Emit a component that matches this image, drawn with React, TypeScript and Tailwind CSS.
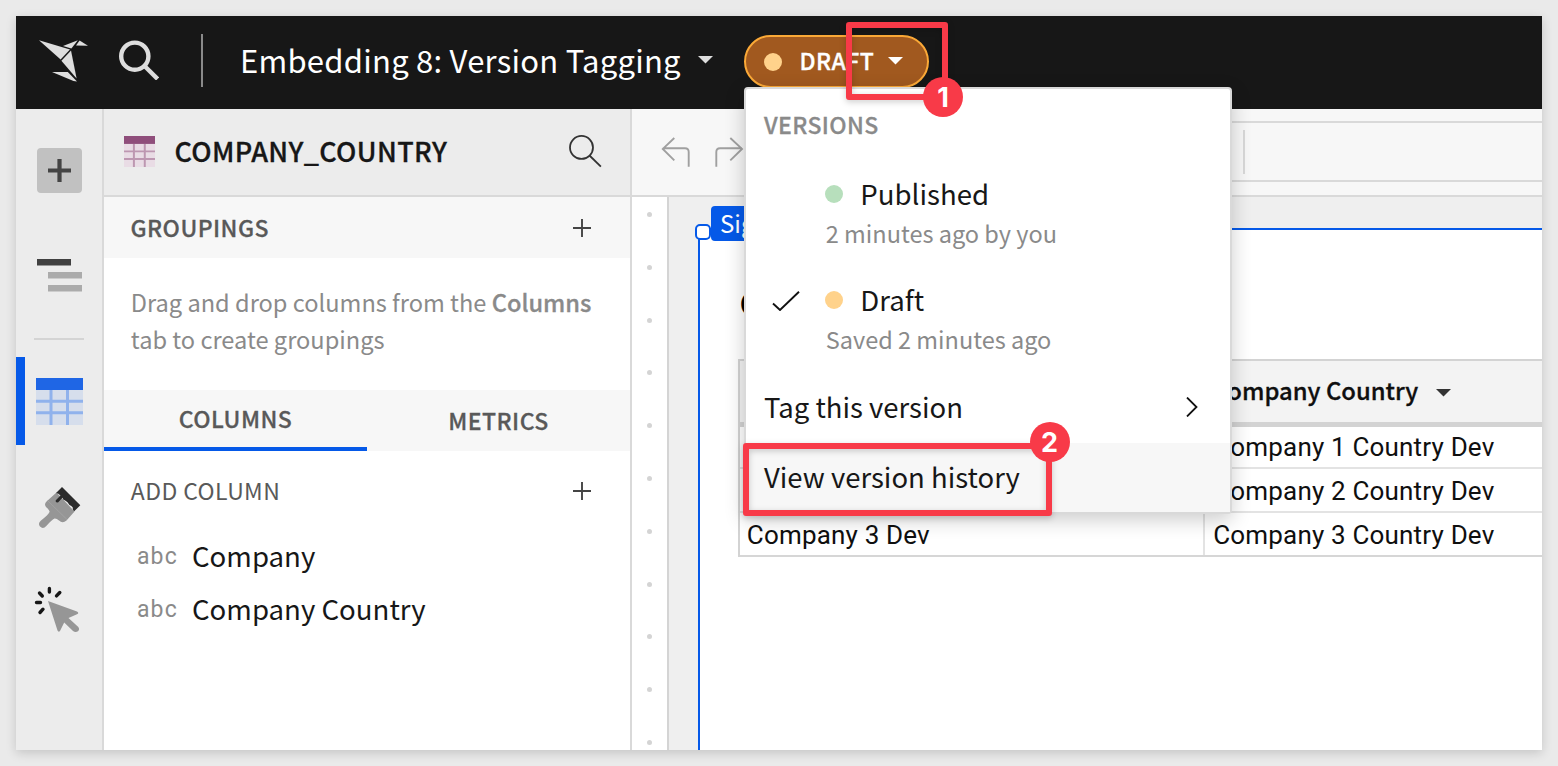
import type { ReactNode } from "react";

function HummingbirdLogo() {
  return (
    <svg className="h-12 w-[50px]" viewBox="0 0 50 48" fill="#dedede">
      <path d="M0 3.2 L31 12.6 L21.6 22.6 Z" />
      <path d="M24 8.9 L38.8 3.2 L32.4 11.4 Z" />
      <path d="M40.600 3.600 L49 8.800 L37 8.500 Z" />
      <path d="M22.4 23.8 L32 13.6 L37.6 41.6 Z" />
      <path d="M13 34.9 L28.8 34.9 L38 44.6 L34.5 44 Z" />
    </svg>
  );
}

function Caret({ className }: { className: string }) {
  return (
    <svg className={`h-[7.500px] w-[15px] shrink-0 ${className}`} viewBox="0 0 15 7.5" fill="currentColor">
      <path d="M0 0h15L7.5 7.500z" />
    </svg>
  );
}

function Plus() {
  return (
    <svg className="h-[18px] w-[18px]" viewBox="0 0 18 18" stroke="#444" strokeWidth="1.9">
      <path d="M9 0v18M0 9h18" />
    </svg>
  );
}

function TopBar() {
  return (
    <header className="flex h-[93px] shrink-0 items-start bg-[#171717]">
      <div className="ml-[23px] mt-[21px]">
        <HummingbirdLogo />
      </div>
      <svg className="ml-[30px] mt-6 h-10 w-10" viewBox="0 0 40 40" fill="none" stroke="#dedede" strokeWidth="4.4">
        <circle cx="15.8" cy="16.2" r="13.6" />
        <path d="M25.8 26.2 L38.6 39" />
      </svg>
      <div className="ml-[42px] mt-[18px] h-[53px] w-[2px] bg-[#8a8a8a]" />
      <h1 className="ml-[37px] mt-[22px] w-[443px] whitespace-nowrap text-[31px] leading-[44px] tracking-[0.25px] text-white">
        Embedding 8: Version Tagging
      </h1>
      <Caret className="ml-[14.500px] mt-[40px] text-[#dedede]" />
      <button className="ml-[31.500px] mt-[19px] flex h-[53px] w-[185px] items-center rounded-full border-2 border-[#fba937] bg-[#a1591f]">
        <span className="ml-[18px] h-[18px] w-[18px] rounded-full bg-[#ffd28b]" />
        <span className="ml-[17.500px] -mt-[3px] w-[74px] text-[23px] leading-[32px] font-medium tracking-[0.45px] text-white [-webkit-text-stroke:0.3px]">DRAFT</span>
        <Caret className="ml-[14.500px] -mt-px text-white" />
      </button>
    </header>
  );
}

function GridIcon({ className, head, body, line }: { className: string; head: string; body: string; line: string }) {
  return (
    <svg className={className} viewBox="0 0 47 47">
      <path fill={body} d="M0 0h47v47H0z" />
      <path stroke={line} strokeWidth="3" d="M15 12v35M31.5 12v35M0 23.3h47M0 34.7h47" />
      <path fill={head} d="M0 0h47v12H0z" />
    </svg>
  );
}

function Rail() {
  return (
    <nav className="relative flex w-[88px] shrink-0 flex-col border-r-2 border-[#d9d9d9] bg-[#ececec]">
      <div className="ml-[21px] mt-[39px] flex h-[45px] w-[45px] items-center justify-center rounded-[4px] bg-[#c1c1c1]">
        <svg className="h-[23px] w-[23px]" viewBox="0 0 23 23" stroke="#444" strokeWidth="4.2">
          <path d="M11.5 0v23M0 11.5h23" />
        </svg>
      </div>
      <svg className="ml-[21px] mt-[66px] h-[33px] w-[45px]" viewBox="0 0 45 33">
        <path fill="#404040" d="M0 0h34v6.5H0z" />
        <path fill="#ababab" d="M11 13h34v6.5H11zM11 26h34v6.5H11z" />
      </svg>
      <div className="ml-[18px] mt-[46px] h-[2px] w-[50px] bg-[#d4d4d4]" />
      <div className="mt-[17px] flex h-[88px] items-center border-l-[9px] border-[#0559e8] pl-[11px]">
        <GridIcon className="h-[47px] w-[47px]" head="#1f66e5" body="#d6deec" line="#90b2ec" />
      </div>
      <svg className="ml-[18px] mt-[37px] h-[50px] w-[50px]" viewBox="34 482 50 50">
        <path
          fill="#969696"
          d="M56.5 492.5 L74.5 511.5 L66.5 520.5 Q62.5 524 59 520.5 Q56.5 518.2 54.5 518.5 Q52.5 519 46.3 526 Q43 529.5 40 526.500 Q37.500 523.500 41 520.500 Q48.500 514.500 49.500 512 Q50 510.500 46.500 507.500 Q43.500 504.500 46.500 501.500 Z"
        />
        <path stroke="#ababab" strokeWidth=".6" d="M47.500 500.500 L67 519.500" />
        <path
          fill="#2b2b2b"
          d="M62 487 L80.300 505.300 L74.200 511.300 Q72.500 510.500 72.800 507.500 Q71.500 505.500 69.500 505 Q67.500 501.500 65.500 500.800 Q62.500 500 62.500 497.800 L58 502.500 Q55 502.500 55.800 500.300 L60.500 495.500 Q58.500 493 56 493 Z"
        />
      </svg>
      <svg className="ml-[18px] mt-[52px] h-[50px] w-[50px]" viewBox="34 584 50 50">
        <path stroke="#171717" strokeWidth="3.4" strokeLinecap="round" d="M49.4 588.500V592M39.500 593L42.300 596M59.800 592.500L56.500 595.900M36.500 602.500H40.500M43 609.200L40 612.500" />
        <path fill="#969696" d="M48 601 L77 611.500 Q79.500 613 77 614.300 L68.500 618 L78.300 627 Q80 629.500 78 631.300 Q75.500 633 73 631 L64.200 622.500 L60 631 Q58.500 632.500 57.500 630.500 Z" />
      </svg>
    </nav>
  );
}

function ColumnRow({ name }: { name: string }) {
  return (
    <div className="flex h-[53px] items-center pl-[33px]">
      <span className="-mt-[2px] w-[55px] font-['Roboto',sans-serif] text-[23px] leading-[28px] tracking-[1.1px] text-[#8a8a8a]">abc</span>
      <span className="-mt-[6px] text-[27.6px] leading-[40px] text-[#171717]">{name}</span>
    </div>
  );
}

function SidePanel() {
  return (
    <aside className="flex w-[528px] shrink-0 flex-col border-r-2 border-[#d9d9d9] bg-white">
      <div className="flex h-[88px] shrink-0 items-center border-b-2 border-[#d9d9d9] bg-[#ececec]">
        <GridIcon className="-mt-[2px] ml-5 h-[31px] w-[31px]" head="#8f4e7b" body="#e9dce5" line="#bd97b1" />
        <h2 className="-mt-[3px] ml-[19.500px] flex-1 text-[27px] leading-[40px] font-medium tracking-[0.35px] text-[#171717] [-webkit-text-stroke:0.3px]">COMPANY_COUNTRY</h2>
        <svg className="-mt-[2px] mr-7 h-[34px] w-[34px]" viewBox="568 134 34 34" fill="none" stroke="#333" strokeWidth="1.8">
          <circle cx="581.500" cy="147.400" r="11.500" />
          <path d="M589.500 155.500L600.900 166.600" />
        </svg>
      </div>
      <div className="flex h-[61px] items-center justify-between bg-[#f7f7f7] pl-[26.500px] pr-[39px]">
        <h3 className="-mt-[1px] text-[23px] leading-[34px] font-medium tracking-[0.45px] text-[#595959] [-webkit-text-stroke:0.3px]">GROUPINGS</h3>
        <Plus />
      </div>
      <p className="h-[132px] whitespace-nowrap pl-[26.800px] pt-[26px] text-[23.6px] leading-[37px] text-[#8a8a8a]">
        Drag and drop columns from the <span className="font-medium [-webkit-text-stroke:0.3px]">Columns</span>
        <br />
        tab to create groupings
      </p>
      <div className="flex h-[61px] bg-[#f7f7f7] text-[23px] leading-[34px] font-medium tracking-[0.45px] text-[#595959] [-webkit-text-stroke:0.3px]">
        <div className="flex w-[263px] items-center justify-center border-b-4 border-[#0559e8]">
          <span className="-mt-[2px]">COLUMNS</span>
        </div>
        <div className="flex flex-1 items-center justify-center">
          <span className="-mt-[2px]">METRICS</span>
        </div>
      </div>
      <div className="flex h-[80px] items-center justify-between pl-[26.800px] pr-[39px]">
        <h3 className="-mt-[3px] text-[23px] leading-[34px] tracking-[0.4px] text-[#595959]">ADD COLUMN</h3>
        <Plus />
      </div>
      <ColumnRow name="Company" />
      <ColumnRow name="Company Country" />
    </aside>
  );
}

function TableRow({ a = "", b, className }: { a?: string; b: string; className: string }) {
  return (
    <div className={`flex border-b-2 font-['Roboto',sans-serif] text-[26px] leading-[30px] tracking-[0.18px] text-[#0f0f0f] ${className}`}>
      <div className="flex w-[465px] shrink-0 items-end border-r-2 border-[#e3e3e3] pb-[5px] pl-[6.800px]">{a}</div>
      <div className="flex items-end whitespace-nowrap pb-[5px] pl-[8.200px]">{b}</div>
    </div>
  );
}

const rulerDots = Array.from({ length: 11 }, (_, i) => i);

function Workspace() {
  return (
    <main className="flex min-w-0 flex-1 flex-col">
      <div className="flex h-[88px] shrink-0 border-b-2 border-[#d9d9d9] bg-[#f7f7f7]">
        <svg className="ml-7 mt-7 h-[34px] w-[84px] shrink-0" viewBox="660 137 84 34" fill="none" stroke="#a0a0a0" strokeWidth="1.9">
          <path d="M674.300 138L662.800 148.900L674.300 160.400M662.800 148.200H685Q688.700 148.200 688.700 152V166.700" />
          <path d="M730.300 138L742 148.900L730.300 160.400M742 148.200H720Q716.300 148.200 716.300 152V166.700" />
        </svg>
        <div className="ml-10 mt-3 h-[61px] flex-1 border-y-2 border-[#d9d9d9] pl-[459px] pt-[7px]">
          <div className="h-[44px] w-[2px] bg-[#d9d9d9]" />
        </div>
      </div>
      <div className="flex min-h-0 flex-1">
        <div className="flex w-[37px] shrink-0 flex-col items-center gap-[47.800px] border-r-2 border-[#d4d4d4] bg-white pt-[15px]">
          {rulerDots.map((i) => (
            <span key={i} className="h-[5px] w-[4.500px] shrink-0 rounded-full bg-[#d4d4d4]" />
          ))}
        </div>
        <div className="relative flex min-w-0 flex-1 bg-[#efefef] pl-[29px] pt-[31px]">
          <div className="min-w-0 flex-1 overflow-hidden border-l-2 border-t-2 border-[#0559e8] bg-white">
            <h2 className="h-[129px] pl-[39.500px] pt-[51px] text-[32px] leading-[43px] font-medium text-black">C</h2>
            <div className="ml-[38px] border-l-2 border-t-2 border-[#d3d3d3]">
              <div className="flex h-[66px] border-b-[5px] border-[#d3d3d3] bg-[#f3f3f3] text-[23.800px] leading-[34px] font-medium text-[#0f0f0f] [-webkit-text-stroke:0.3px]">
                <div className="w-[465px] shrink-0" />
                <div className="whitespace-nowrap pl-[7px] pt-[12px]">Company Country</div>
                <Caret className="ml-[17.500px] mt-[28px] text-[#333]" />
              </div>
              <TableRow b="Company 1 Country Dev" className="h-[42px] border-[#e3e3e3]" />
              <TableRow b="Company 2 Country Dev" className="h-[44px] border-[#e3e3e3]" />
              <TableRow a="Company 3 Dev" b="Company 3 Country Dev" className="h-[44px] border-[#d6d6d6]" />
            </div>
          </div>
          <div className="absolute left-[42px] top-[9px] h-[34.500px] rounded-[4px] bg-[#0559e8] px-[9px] text-[24px] leading-[34px] text-white">Sig</div>
          <div className="absolute left-[25.500px] top-[27px] h-4 w-4 rounded-[5px] border-2 border-[#0559e8] bg-white" />
        </div>
      </div>
    </main>
  );
}

function VersionItem({ label, note, dot, checked = false }: { label: string; note: string; dot: string; checked?: boolean }) {
  return (
    <div className="flex h-[106px] pt-[10px]">
      <div className="w-[79px] shrink-0 pl-[26px] pt-[10px]">
        {checked && (
          <svg className="h-5 w-7" viewBox="0 0 28 20" fill="none" stroke="#111" strokeWidth="1.900">
            <path d="M1 12.500L8 19L27 .8" />
          </svg>
        )}
      </div>
      <div>
        <div className="flex h-[36px] items-center">
          <span className={`mt-px h-[18px] w-[18px] rounded-full ${dot}`} />
          <span className="ml-[17.300px] text-[27.600px] leading-[36px] text-[#171717]">{label}</span>
        </div>
        <div className="mt-[3px] whitespace-nowrap pl-[.8px] text-[23.500px] leading-[38px] text-[#8a8a8a]">{note}</div>
      </div>
    </div>
  );
}

function VersionMenu() {
  return (
    <div className="absolute left-[744px] top-[87px] flex h-[427px] w-[488px] flex-col rounded-[4px] border-2 border-[#d9d9d9] bg-white shadow-[0_6px_20px_rgba(0,0,0,0.2)]">
      <div className="h-[76px] pl-[18px] pt-[18px] text-[23px] leading-[34px] font-medium tracking-[0.4px] text-[#8a8a8a] [-webkit-text-stroke:0.3px]">VERSIONS</div>
      <VersionItem label="Published" note="2 minutes ago by you" dot="bg-[#b7dfbc]" />
      <VersionItem label="Draft" note="Saved 2 minutes ago" dot="bg-[#ffd28b]" checked />
      <div className="flex h-[66px] items-start justify-between pl-[18px] pr-[32.500px] pt-[9px] text-[27.500px] leading-[40px] text-[#171717]">
        <span>Tag this version</span>
        <svg className="mt-[11px] h-5 w-3" viewBox="0 0 12 20" fill="none" stroke="#111" strokeWidth="1.800">
          <path d="M1 .5L10.500 10L1 19.500" />
        </svg>
      </div>
      <div className="h-[69px] bg-[#f7f7f7] pl-[18px] pt-[13px] text-[27.500px] leading-[40px] text-[#171717]">View version history</div>
    </div>
  );
}

function Callout({ frame, badge, children }: { frame: string; badge: string; children: ReactNode }) {
  return (
    <>
      <div className={`absolute rounded-[3px] border-[6px] border-[#f83a48] drop-shadow-[0_2px_3px_rgba(0,0,0,0.2)] ${frame}`} />
      <div className={`absolute flex h-10 w-10 items-center justify-center rounded-full bg-[#f83a48] font-['Inter',sans-serif] text-[27px] leading-none font-bold text-white ${badge}`}>
        {children}
      </div>
    </>
  );
}

export default function App() {
  return (
    <div className="relative h-[766px] w-[1558px] overflow-hidden bg-[#eaeaea] p-4 font-['Noto_Sans_CJK_SC',sans-serif]">
      <div className="flex h-[734px] w-[1526px] flex-col overflow-hidden bg-white shadow-[0_3px_10px_rgba(0,0,0,0.16)]">
        <TopBar />
        <div className="flex min-h-0 flex-1">
          <Rail />
          <SidePanel />
          <Workspace />
        </div>
      </div>
      <VersionMenu />
      <Callout frame="left-[846px] top-[22px] h-[78px] w-[102px]" badge="left-[923px] top-[77px]">1</Callout>
      <Callout frame="left-[743px] top-[443px] h-[73px] w-[309px]" badge="left-[1029.500px] top-[422px]">2</Callout>
    </div>
  );
}
